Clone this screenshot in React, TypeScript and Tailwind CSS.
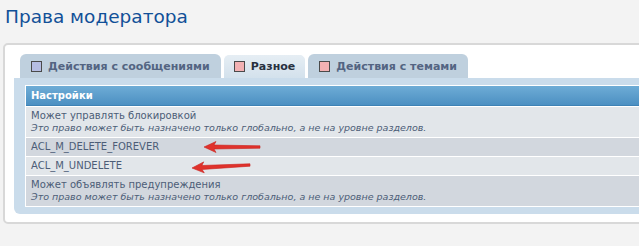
import React from 'react';

const font = { fontFamily: '"DejaVu Sans", Verdana, sans-serif' };

function Arrow({ x1, y1, x2, y2 }: { x1: number; y1: number; x2: number; y2: number }) {
  // drawn from tail (x1,y1) to tip (x2,y2)
  const ang = (Math.atan2(y2 - y1, x2 - x1) * 180) / Math.PI;
  const len = Math.hypot(x2 - x1, y2 - y1);
  return (
    <svg className="absolute left-0 top-0 pointer-events-none" width="639" height="246">
      <g transform={`translate(${x1} ${y1}) rotate(${ang})`}>
        <path
          d={`M0 -1.2 L${len - 10} -2 L${len - 12} -5.5 L${len} 0 L${len - 12} 5.5 L${len - 10} 2 L0 1.2 Z`}
          fill="#e0322c"
          stroke="#c9231f"
          strokeWidth="0.6"
          strokeLinejoin="round"
        />
      </g>
    </svg>
  );
}

function Tab({ label, active, color }: { label: string; active?: boolean; color: string }) {
  return (
    <div
      className={
        active
          ? 'flex items-center gap-[6px] h-[24px] px-[10px] rounded-t-[6px] bg-gradient-to-b from-[#e6eef4] to-[#d3e1ec] border-t border-x border-white text-[#28313f]'
          : 'flex items-center gap-[6px] h-[24px] px-[11px] rounded-t-[6px] bg-[#bfd0de] text-[#536482]'
      }
    >
      <span className="w-[11px] h-[11px] border border-[#4a4a4a]" style={{ backgroundColor: color }} />
      <span className="text-[11px] font-bold leading-none">{label}</span>
    </div>
  );
}

function Row({ dark, title, note }: { dark?: boolean; title: string; note?: string }) {
  return (
    <div className={`border-t border-white px-[5px] py-[3px] ${dark ? 'bg-[#d2d7de]' : 'bg-[#e2e6ea]'} text-[#4c5d77]`}>
      <div className="text-[10px] leading-[12px]">{title}</div>
      {note && <div className="text-[9.5px] leading-[12px] italic">{note}</div>}
    </div>
  );
}

export default function App() {
  const note = 'Это право может быть назначено только глобально, а не на уровне разделов.';
  return (
    <div className="relative w-[639px] h-[246px] overflow-hidden bg-[#f3f3f3]" style={font}>
      <h2 className="pl-[5px] pt-[6px] h-[43px] text-[18.5px] leading-[22px] text-[#115098]">Права модератора</h2>

      <div className="ml-[3px] w-[700px] h-[181px] bg-white border-2 border-[#d8d8d8] rounded-l-[5px] pt-[9px] pl-[9px]">
        <div className="flex gap-[2px] pl-[6px]">
          <Tab label="Действия с сообщениями" color="#b6bde2" />
          <Tab label="Разное" active color="#f2b1b3" />
          <Tab label="Действия с темами" color="#f2b1b3" />
        </div>

        <div className="bg-[#cadceb] rounded-bl-[6px] pl-[11px] pt-[7px] pb-[7px]">
          <div className="border-l border-t border-white">
            <div className="h-[20px] flex items-center px-[5px] bg-gradient-to-b from-[#6eacd6] to-[#4c90c2] border-b border-[#3e82b5] text-white text-[10px] font-bold">
              Настройки
            </div>
            <Row title="Может управлять блокировкой" note={note} />
            <Row dark title="ACL_M_DELETE_FOREVER" />
            <Row title="ACL_M_UNDELETE" />
            <Row dark title="Может объявлять предупреждения" note={note} />
            <div className="h-px bg-white" />
          </div>
        </div>
      </div>

      <Arrow x1={260} y1={147} x2={204} y2={147} />
      <Arrow x1={250} y1={165} x2={192} y2={168} />
    </div>
  );
}
